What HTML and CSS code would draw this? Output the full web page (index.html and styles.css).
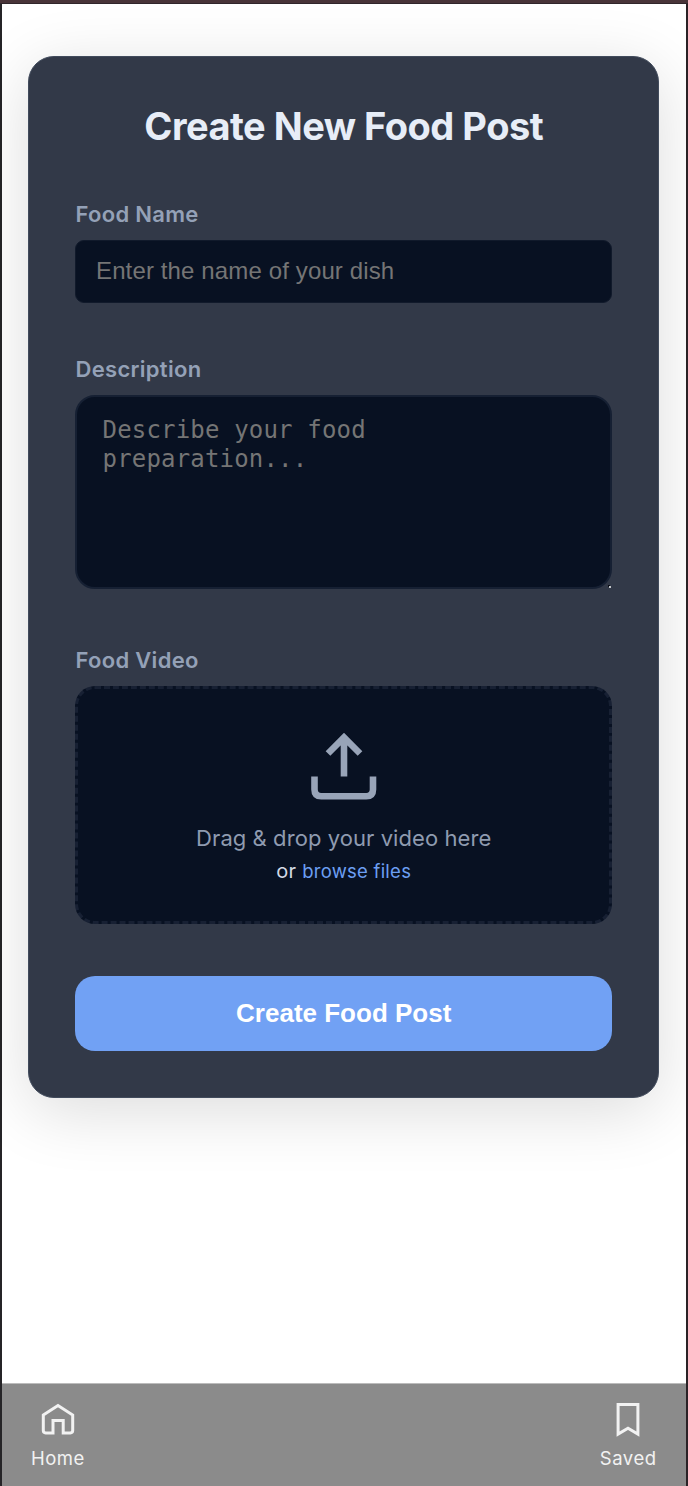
FILE: index.html
```html
<!DOCTYPE html>
<html lang="en">
<head>
<meta charset="utf-8">
<title>Create New Food Post</title>
<link rel="stylesheet" href="styles.css">
</head>
<body>
<div class="topbar"></div>
<div class="screen">
  <main class="content">
    <section class="card">
      <h1 class="title">Create New Food Post</h1>
      <form class="form">
        <div class="field">
          <label class="label label-name" for="name">Food Name</label>
          <input class="input" id="name" type="text" placeholder="Enter the name of your dish">
        </div>
        <div class="field field-description">
          <label class="label label-description" for="description">Description</label>
          <div class="textarea-wrap">
            <textarea class="textarea" id="description" placeholder="Describe your food preparation..."></textarea>
            <span class="grip"></span>
          </div>
        </div>
        <div class="field field-video">
          <span class="label label-video">Food Video</span>
          <div class="dropzone">
            <svg class="upload-icon" viewBox="0 0 66 68" fill="none" stroke="#98a4b8" stroke-width="6.6">
              <path d="M33 44.500V6M17 21.500 33 5.500 49 21.500M3.500 44.500v13q0 6.700 6.700 6.700h45.100q6.700 0 6.700-6.700v-13"/>
            </svg>
            <p class="drop-text">Drag &amp; drop your video here</p>
            <p class="browse-text">or <span class="browse-link">browse files</span></p>
          </div>
        </div>
        <button class="submit" type="button">Create Food Post</button>
      </form>
    </section>
  </main>
  <nav class="nav">
    <a class="nav-item">
      <svg class="nav-icon" viewBox="0 0 36 36" fill="none" stroke="#f2f2f2" stroke-width="3">
        <path d="M3.300 13 18 3.600l14.700 9.400v15.600q0 2.300-2.300 2.300h-7.200V18.600H13v12.300H5.600q-2.300 0-2.300-2.300z"/>
      </svg>
      <span class="nav-label">Home</span>
    </a>
    <a class="nav-item nav-item-saved">
      <svg class="nav-icon" viewBox="0 0 36 36" fill="none" stroke="#f2f2f2" stroke-width="3">
        <path d="M8.100 2.500h19.800v29.600L18 26.200l-9.900 5.900z"/>
      </svg>
      <span class="nav-label">Saved</span>
    </a>
  </nav>
</div>
</body>
</html>
```
FILE: styles.css
```css
* { box-sizing: border-box; }
body {
  margin: 0;
  height: 1486px;
  display: flex;
  flex-direction: column;
  font-family: Inter, "Liberation Sans", sans-serif;
  background: #fff;
  overflow: hidden;
}
.topbar {
  height: 4px;
  flex: none;
  background: #493439;
  border-bottom: 1px solid #30262b;
}
.screen {
  flex: 1;
  display: flex;
  flex-direction: column;
  border-left: 2px solid #252427;
  border-right: 2px solid #2a2226;
}
.content { flex: 1; padding: 52px 26.6px 0 26px; }
.card {
  height: 1042px;
  border: 1px solid #414b5c;
  border-radius: 26px;
  background: #323948;
  padding: 45px 46px 46px;
  box-shadow: 0 13px 66px rgba(0, 0, 0, .14);
}
.title {
  margin: 0;
  height: 48px;
  line-height: 48px;
  font-size: 38px;
  font-weight: 700;
  letter-spacing: -.5px;
  text-align: center;
  color: #e7edf7;
  white-space: nowrap;
}
.form { display: flex; flex-direction: column; padding-top: 49px; }
.field { display: flex; flex-direction: column; gap: 12px; }
.field-description { margin-top: 51px; }
.field-video { margin-top: 57px; gap: 11px; }
.label {
  height: 29px;
  line-height: 30px;
  padding-left: .5px;
  font-size: 22px;
  font-weight: 600;
  letter-spacing: .3px;
  color: #94a1b7;
}
.label-video { line-height: 29px; }
.input {
  height: 63px;
  border: 1px solid #111a2b;
  border-radius: 9px;
  padding: 0 20px 1px;
  background: #081122;
  font: 24px "Liberation Sans", Arial, sans-serif;
  letter-spacing: .13px;
}
.input::placeholder, .textarea::placeholder { color: #757575; }
.textarea-wrap { position: relative; height: 194px; }
.textarea {
  display: block;
  width: 100%;
  height: 194px;
  resize: none;
  border: 2px solid #162033;
  border-radius: 20px;
  padding: 19px 50px 19px 25.5px;
  background: #081122;
  font: 24px/29px "DejaVu Sans Mono", monospace;
  letter-spacing: .18px;
}
.grip {
  position: absolute;
  right: 1px;
  bottom: 1px;
  width: 2px;
  height: 2px;
  background: #c5c8cc;
  box-shadow: -1px -1px #080c15;
}
.dropzone {
  height: 238px;
  border: 3px dashed #172033;
  border-radius: 20px;
  background: #081122;
  display: flex;
  flex-direction: column;
  align-items: center;
  padding-top: 43px;
}
.upload-icon { width: 66px; height: 68px; flex: none; }
.drop-text {
  margin: 22px 0 0;
  height: 32px;
  line-height: 32px;
  font-size: 22px;
  letter-spacing: .07px;
  color: #8f9bb0;
  white-space: nowrap;
}
.browse-text {
  margin: 1px 0 0;
  height: 32px;
  line-height: 32px;
  font-size: 20px;
  letter-spacing: .25px;
  color: #d3dae6;
}
.browse-link { font-size: 18.5px; color: #6c9ff2; }
.submit {
  margin-top: 52px;
  height: 75px;
  border: 0;
  border-radius: 20px;
  background: #71a1f4;
  color: #fff;
  font: 700 26px "Liberation Sans", Arial, sans-serif;
}
.nav {
  height: 103px;
  flex: none;
  display: flex;
  justify-content: space-between;
  padding: 18px 29px 0;
  background: #8b8b8b;
  border-top: 1px solid #bcbcbc;
}
.nav-item { display: flex; flex-direction: column; align-items: center; gap: 7px; }
.nav-item-saved { margin-right: .5px; }
.nav-icon { width: 36px; height: 36px; }
.nav-label {
  font-size: 18.5px;
  line-height: 26px;
  letter-spacing: .5px;
  color: #f2f2f2;
}
```
